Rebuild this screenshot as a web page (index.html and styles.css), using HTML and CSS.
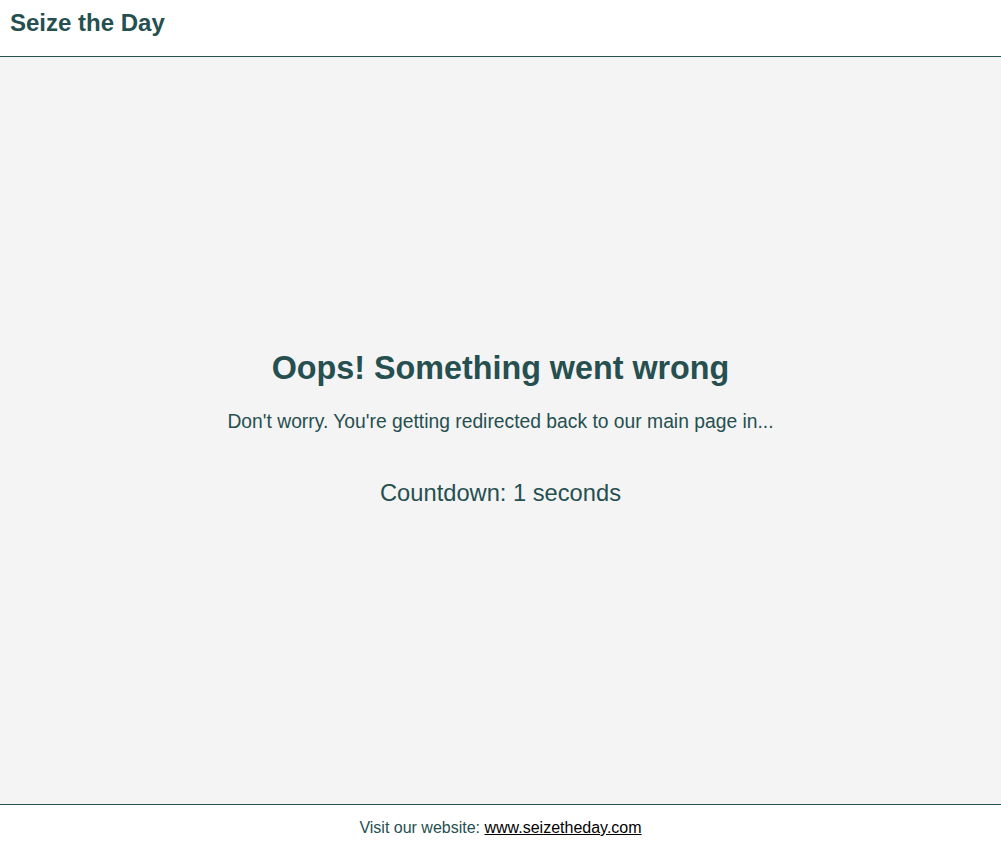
FILE: index.html
```html
<!DOCTYPE html>
<html lang="en">
<head>
<meta charset="utf-8">
<title>Seize the Day</title>
<link rel="stylesheet" href="styles.css">
</head>
<body>
<header class="site-header">
  <h1 class="brand">Seize the Day</h1>
</header>
<main class="content">
  <div class="message">
    <h2 class="message-title">Oops! Something went wrong</h2>
    <p class="message-text">Don't worry. You're getting redirected back to our main page in...</p>
    <p class="countdown">Countdown: 1 seconds</p>
  </div>
</main>
<footer class="site-footer">
  <p class="footer-text">Visit our website: <a class="footer-link" href="#">www.seizetheday.com</a></p>
</footer>
</body>
</html>
```
FILE: styles.css
```css
html, body {
  margin: 0;
  padding: 0;
  height: 100%;
}
body {
  display: flex;
  flex-direction: column;
  font-family: "Liberation Sans", Arial, sans-serif;
  color: #264f50;
  background: #ffffff;
}
.site-header {
  height: 56px;
  border-bottom: 1px solid #264f50;
  padding: 0 10px;
  display: flex;
  align-items: flex-start;
}
.brand {
  margin: 9px 0 0;
  font-size: 24px;
  font-weight: bold;
  line-height: 28px;
}
.content {
  flex: 1;
  background: #f4f4f4;
  display: flex;
  align-items: center;
  justify-content: center;
}
.message {
  text-align: center;
  margin-bottom: 4px;
}
.message-title {
  margin: 0;
  font-size: 32.3px;
  line-height: 37px;
  font-weight: bold;
}
.message-text {
  margin: 24px 0 0;
  font-size: 19.3px;
  line-height: 22px;
}
.countdown {
  margin: 46px 0 0;
  font-size: 23.7px;
  line-height: 28px;
}
.site-footer {
  height: 50px;
  border-top: 1px solid #264f50;
  display: flex;
  justify-content: center;
}
.footer-text {
  margin: 14px 0 0;
  font-size: 16px;
  line-height: 18px;
}
.footer-link {
  color: #000000;
}
```
